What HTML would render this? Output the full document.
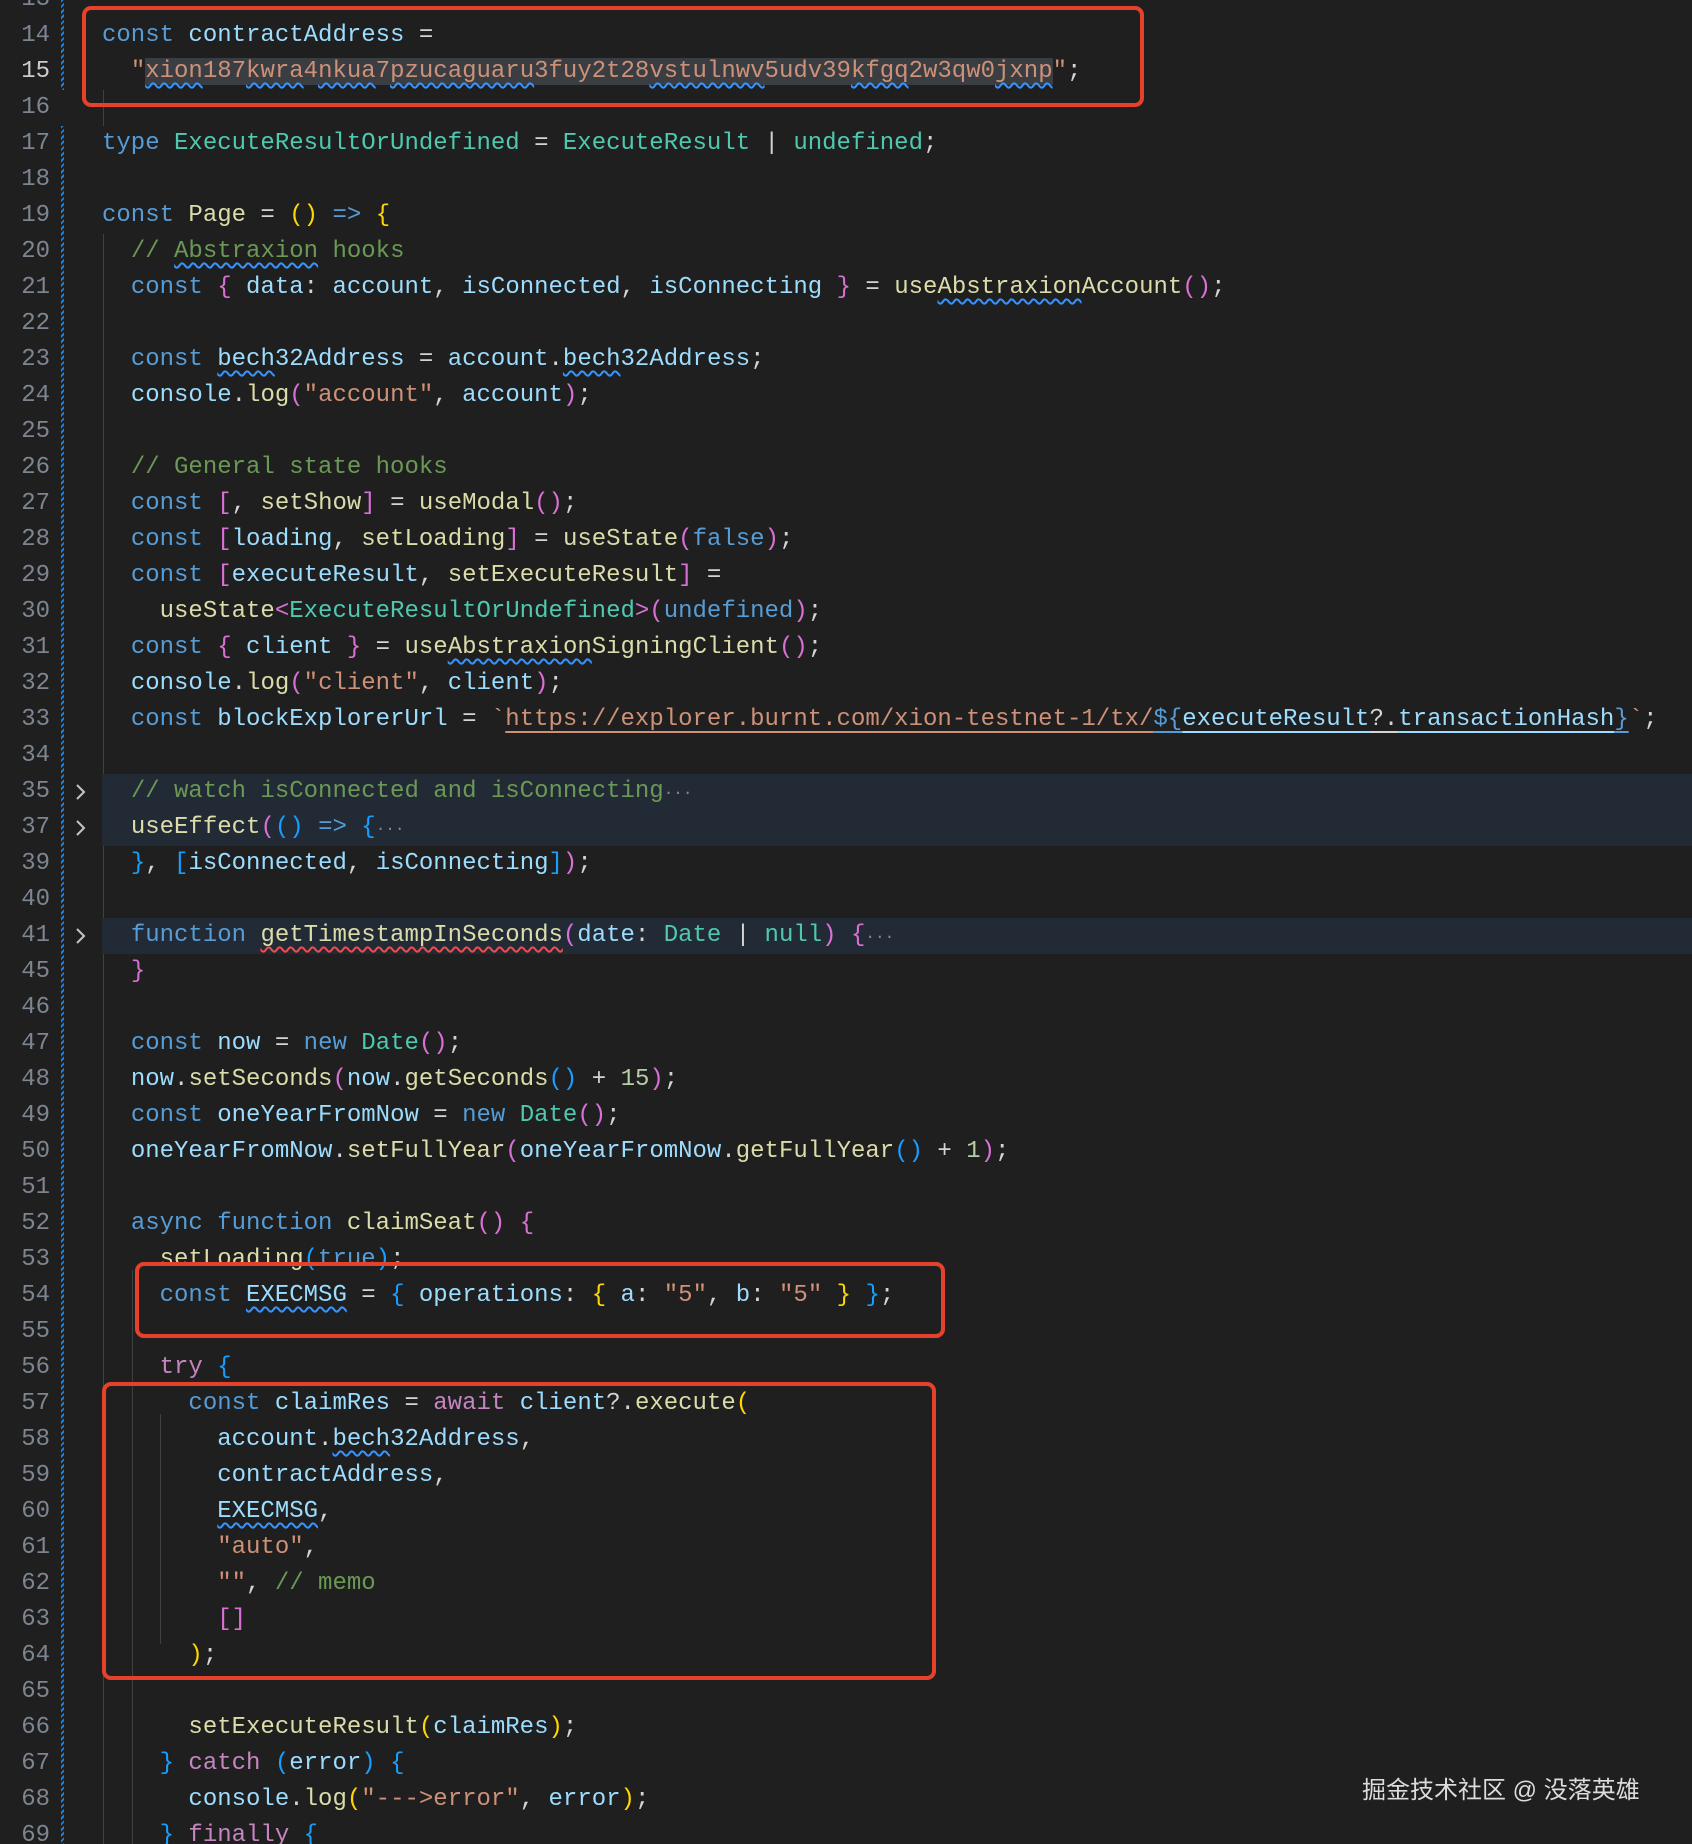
<!DOCTYPE html>
<html><head><meta charset="utf-8">
<style>
html,body{margin:0;padding:0;background:#1f1f1f;width:1692px;height:1844px;overflow:hidden;position:relative}
#wrap{position:absolute;left:0;top:3px;width:1692px;height:1844px}
.r{position:absolute;left:0;width:1692px;height:36px;line-height:36px;font-family:"Liberation Mono",monospace;font-size:24px;color:#d4d4d4;white-space:pre}
.n{position:absolute;left:0;width:50px;text-align:right;color:#7d8590}
.code{position:absolute;left:102px;top:0;right:0;height:36px}
.hlb{position:absolute;left:102px;right:0;top:0;height:36px;background:#222a35}
.k{color:#569cd6}.v{color:#9cdcfe}.f{color:#dcdcaa}.s{color:#ce9178}.c{color:#6a9955}.t{color:#4ec9b0}.p{color:#c586c0}.y{color:#ffd700}.m{color:#da70d6}.b{color:#179fff}.w{color:#d4d4d4}.num{color:#b5cea8}
.sq{text-decoration:underline wavy #3794ff;text-decoration-thickness:1.5px;text-underline-offset:5px}
.sr{text-decoration:underline wavy #f14c4c;text-decoration-thickness:1.5px;text-underline-offset:5px}
.ul{text-decoration:underline;text-underline-offset:6px}
.dots{color:#8a8a8a;font-size:16px}
.arrow{position:absolute;left:73px;top:9px;width:14px;height:18px}
.gut{position:absolute;left:61px;width:3px;background:repeating-linear-gradient(135deg,#1b81e0 0 2px,#1f1f1f 2px 4px)}
.box{position:absolute;border:4px solid #e5412b;border-radius:9px;box-sizing:border-box}
.guide{position:absolute;width:1px;background:#404040}
.wm{position:absolute;left:1362px;top:1770px;font-family:"Liberation Sans","Noto Sans CJK SC",sans-serif;font-size:24px;color:#dcdcdc;white-space:pre}
</style></head><body>
<div class="gut" style="top:0;height:90px"></div>
<div class="gut" style="top:126px;height:1721px"></div>
<div id="wrap">
<div class="guide" style="left:103px;top:87px;height:36px"></div>
<div class="guide" style="left:103px;top:231px;height:1613px"></div>
<div class="guide" style="left:132px;top:1267px;height:577px"></div>
<div class="guide" style="left:160px;top:1411px;height:230px"></div>

<div class="r" style="top:-21px"><span class="n">13</span></div>
<div class="r" style="top:15px"><span class="n">14</span><span class="code"><span class="k">const</span> <span class="v">contractAddress</span> =</span></div>
<div class="r" style="top:51px"><span class="n" style="color:#ccc">15</span><span class="code">  <span class="s">"<span style="background:#3a3d41"><span class="sq">xion</span>187<span class="sq">kwra</span>4<span class="sq">nkua</span>7<span class="sq">pzucaguaru</span>3fuy2t28<span class="sq">vstulnwv</span>5udv39<span class="sq">kfgq</span>2w3qw0<span class="sq">jxnp</span></span>"</span>;</span></div>
<div class="r" style="top:87px"><span class="n">16</span></div>
<div class="r" style="top:123px"><span class="n">17</span><span class="code"><span class="k">type</span> <span class="t">ExecuteResultOrUndefined</span> = <span class="t">ExecuteResult</span> | <span class="t">undefined</span>;</span></div>
<div class="r" style="top:159px"><span class="n">18</span></div>
<div class="r" style="top:195px"><span class="n">19</span><span class="code"><span class="k">const</span> <span class="f">Page</span> = <span class="y">()</span> <span class="k">=&gt;</span> <span class="y">{</span></span></div>
<div class="r" style="top:231px"><span class="n">20</span><span class="code">  <span class="c">// <span class="sq">Abstraxion</span> hooks</span></span></div>
<div class="r" style="top:267px"><span class="n">21</span><span class="code">  <span class="k">const</span> <span class="m">{</span> <span class="v">data</span>: <span class="v">account</span>, <span class="v">isConnected</span>, <span class="v">isConnecting</span> <span class="m">}</span> = <span class="f">use<span class="sq">Abstraxion</span>Account</span><span class="m">()</span>;</span></div>
<div class="r" style="top:303px"><span class="n">22</span></div>
<div class="r" style="top:339px"><span class="n">23</span><span class="code">  <span class="k">const</span> <span class="v"><span class="sq">bech</span>32Address</span> = <span class="v">account</span>.<span class="v"><span class="sq">bech</span>32Address</span>;</span></div>
<div class="r" style="top:375px"><span class="n">24</span><span class="code">  <span class="v">console</span>.<span class="f">log</span><span class="m">(</span><span class="s">"account"</span>, <span class="v">account</span><span class="m">)</span>;</span></div>
<div class="r" style="top:411px"><span class="n">25</span></div>
<div class="r" style="top:447px"><span class="n">26</span><span class="code">  <span class="c">// General state hooks</span></span></div>
<div class="r" style="top:483px"><span class="n">27</span><span class="code">  <span class="k">const</span> <span class="m">[</span>, <span class="f">setShow</span><span class="m">]</span> = <span class="f">useModal</span><span class="m">()</span>;</span></div>
<div class="r" style="top:519px"><span class="n">28</span><span class="code">  <span class="k">const</span> <span class="m">[</span><span class="v">loading</span>, <span class="f">setLoading</span><span class="m">]</span> = <span class="f">useState</span><span class="m">(</span><span class="k">false</span><span class="m">)</span>;</span></div>
<div class="r" style="top:555px"><span class="n">29</span><span class="code">  <span class="k">const</span> <span class="m">[</span><span class="v">executeResult</span>, <span class="f">setExecuteResult</span><span class="m">]</span> =</span></div>
<div class="r" style="top:591px"><span class="n">30</span><span class="code">    <span class="f">useState</span><span class="m">&lt;</span><span class="t">ExecuteResultOrUndefined</span><span class="m">&gt;(</span><span class="k">undefined</span><span class="m">)</span>;</span></div>
<div class="r" style="top:627px"><span class="n">31</span><span class="code">  <span class="k">const</span> <span class="m">{</span> <span class="v">client</span> <span class="m">}</span> = <span class="f">use<span class="sq">Abstraxion</span>SigningClient</span><span class="m">()</span>;</span></div>
<div class="r" style="top:663px"><span class="n">32</span><span class="code">  <span class="v">console</span>.<span class="f">log</span><span class="m">(</span><span class="s">"client"</span>, <span class="v">client</span><span class="m">)</span>;</span></div>
<div class="r" style="top:699px"><span class="n">33</span><span class="code">  <span class="k">const</span> <span class="v">blockExplorerUrl</span> = <span class="s">`<span class="ul">https://explorer.burnt.com/xion-testnet-1/tx/</span></span><span class="k ul">${</span><span class="v ul">executeResult</span><span class="w ul">?.</span><span class="v ul">transactionHash</span><span class="k ul">}</span><span class="s">`</span>;</span></div>
<div class="r" style="top:735px"><span class="n">34</span></div>
<div class="r" style="top:771px"><span class="hlb"></span><span class="n">35</span><svg class="arrow" viewBox="0 0 14 18"><path d="M4 2 L11 9 L4 16" fill="none" stroke="#c5c5c5" stroke-width="2"/></svg><span class="code">  <span class="c">// watch isConnected and isConnecting</span><span class="dots">···</span></span></div>
<div class="r" style="top:807px"><span class="hlb"></span><span class="n">37</span><svg class="arrow" viewBox="0 0 14 18"><path d="M4 2 L11 9 L4 16" fill="none" stroke="#c5c5c5" stroke-width="2"/></svg><span class="code">  <span class="f">useEffect</span><span class="m">(</span><span class="b">()</span> <span class="k">=&gt;</span> <span class="b">{</span><span class="dots">···</span></span></div>
<div class="r" style="top:843px"><span class="n">39</span><span class="code">  <span class="b">}</span>, <span class="b">[</span><span class="v">isConnected</span>, <span class="v">isConnecting</span><span class="b">]</span><span class="m">)</span>;</span></div>
<div class="r" style="top:879px"><span class="n">40</span></div>
<div class="r" style="top:915px"><span class="hlb"></span><span class="n">41</span><svg class="arrow" viewBox="0 0 14 18"><path d="M4 2 L11 9 L4 16" fill="none" stroke="#c5c5c5" stroke-width="2"/></svg><span class="code">  <span class="k">function</span> <span class="f sr">getTimestampInSeconds</span><span class="m">(</span><span class="v">date</span>: <span class="t">Date</span> | <span class="t">null</span><span class="m">)</span> <span class="m">{</span><span class="dots">···</span></span></div>
<div class="r" style="top:951px"><span class="n">45</span><span class="code">  <span class="m">}</span></span></div>
<div class="r" style="top:987px"><span class="n">46</span></div>
<div class="r" style="top:1023px"><span class="n">47</span><span class="code">  <span class="k">const</span> <span class="v">now</span> = <span class="k">new</span> <span class="t">Date</span><span class="m">()</span>;</span></div>
<div class="r" style="top:1059px"><span class="n">48</span><span class="code">  <span class="v">now</span>.<span class="f">setSeconds</span><span class="m">(</span><span class="v">now</span>.<span class="f">getSeconds</span><span class="b">()</span> + <span class="num">15</span><span class="m">)</span>;</span></div>
<div class="r" style="top:1095px"><span class="n">49</span><span class="code">  <span class="k">const</span> <span class="v">oneYearFromNow</span> = <span class="k">new</span> <span class="t">Date</span><span class="m">()</span>;</span></div>
<div class="r" style="top:1131px"><span class="n">50</span><span class="code">  <span class="v">oneYearFromNow</span>.<span class="f">setFullYear</span><span class="m">(</span><span class="v">oneYearFromNow</span>.<span class="f">getFullYear</span><span class="b">()</span> + <span class="num">1</span><span class="m">)</span>;</span></div>
<div class="r" style="top:1167px"><span class="n">51</span></div>
<div class="r" style="top:1203px"><span class="n">52</span><span class="code">  <span class="k">async</span> <span class="k">function</span> <span class="f">claimSeat</span><span class="m">()</span> <span class="m">{</span></span></div>
<div class="r" style="top:1239px"><span class="n">53</span><span class="code">    <span class="f">setLoading</span><span class="b">(</span><span class="k">true</span><span class="b">)</span>;</span></div>
<div class="r" style="top:1275px"><span class="n">54</span><span class="code">    <span class="k">const</span> <span class="v sq">EXECMSG</span> = <span class="b">{</span> <span class="v">operations</span>: <span class="y">{</span> <span class="v">a</span>: <span class="s">"5"</span>, <span class="v">b</span>: <span class="s">"5"</span> <span class="y">}</span> <span class="b">}</span>;</span></div>
<div class="r" style="top:1311px"><span class="n">55</span></div>
<div class="r" style="top:1347px"><span class="n">56</span><span class="code">    <span class="p">try</span> <span class="b">{</span></span></div>
<div class="r" style="top:1383px"><span class="n">57</span><span class="code">      <span class="k">const</span> <span class="v">claimRes</span> = <span class="p">await</span> <span class="v">client</span>?.<span class="f">execute</span><span class="y">(</span></span></div>
<div class="r" style="top:1419px"><span class="n">58</span><span class="code">        <span class="v">account</span>.<span class="v"><span class="sq">bech</span>32Address</span>,</span></div>
<div class="r" style="top:1455px"><span class="n">59</span><span class="code">        <span class="v">contractAddress</span>,</span></div>
<div class="r" style="top:1491px"><span class="n">60</span><span class="code">        <span class="v sq">EXECMSG</span>,</span></div>
<div class="r" style="top:1527px"><span class="n">61</span><span class="code">        <span class="s">"auto"</span>,</span></div>
<div class="r" style="top:1563px"><span class="n">62</span><span class="code">        <span class="s">""</span>, <span class="c">// memo</span></span></div>
<div class="r" style="top:1599px"><span class="n">63</span><span class="code">        <span class="m">[]</span></span></div>
<div class="r" style="top:1635px"><span class="n">64</span><span class="code">      <span class="y">)</span>;</span></div>
<div class="r" style="top:1671px"><span class="n">65</span></div>
<div class="r" style="top:1707px"><span class="n">66</span><span class="code">      <span class="f">setExecuteResult</span><span class="y">(</span><span class="v">claimRes</span><span class="y">)</span>;</span></div>
<div class="r" style="top:1743px"><span class="n">67</span><span class="code">    <span class="b">}</span> <span class="p">catch</span> <span class="b">(</span><span class="v">error</span><span class="b">)</span> <span class="b">{</span></span></div>
<div class="r" style="top:1779px"><span class="n">68</span><span class="code">      <span class="v">console</span>.<span class="f">log</span><span class="y">(</span><span class="s">"---&gt;error"</span>, <span class="v">error</span><span class="y">)</span>;</span></div>
<div class="r" style="top:1815px"><span class="n">69</span><span class="code">    <span class="b">}</span> <span class="p">finally</span> <span class="b">{</span></span></div>
</div>
<div class="box" style="left:82px;top:6px;width:1062px;height:101px"></div>
<div class="box" style="left:135px;top:1262px;width:810px;height:76px"></div>
<div class="box" style="left:102px;top:1382px;width:834px;height:298px"></div>
<div class="wm">掘金技术社区 @ 没落英雄</div>
</body></html>
